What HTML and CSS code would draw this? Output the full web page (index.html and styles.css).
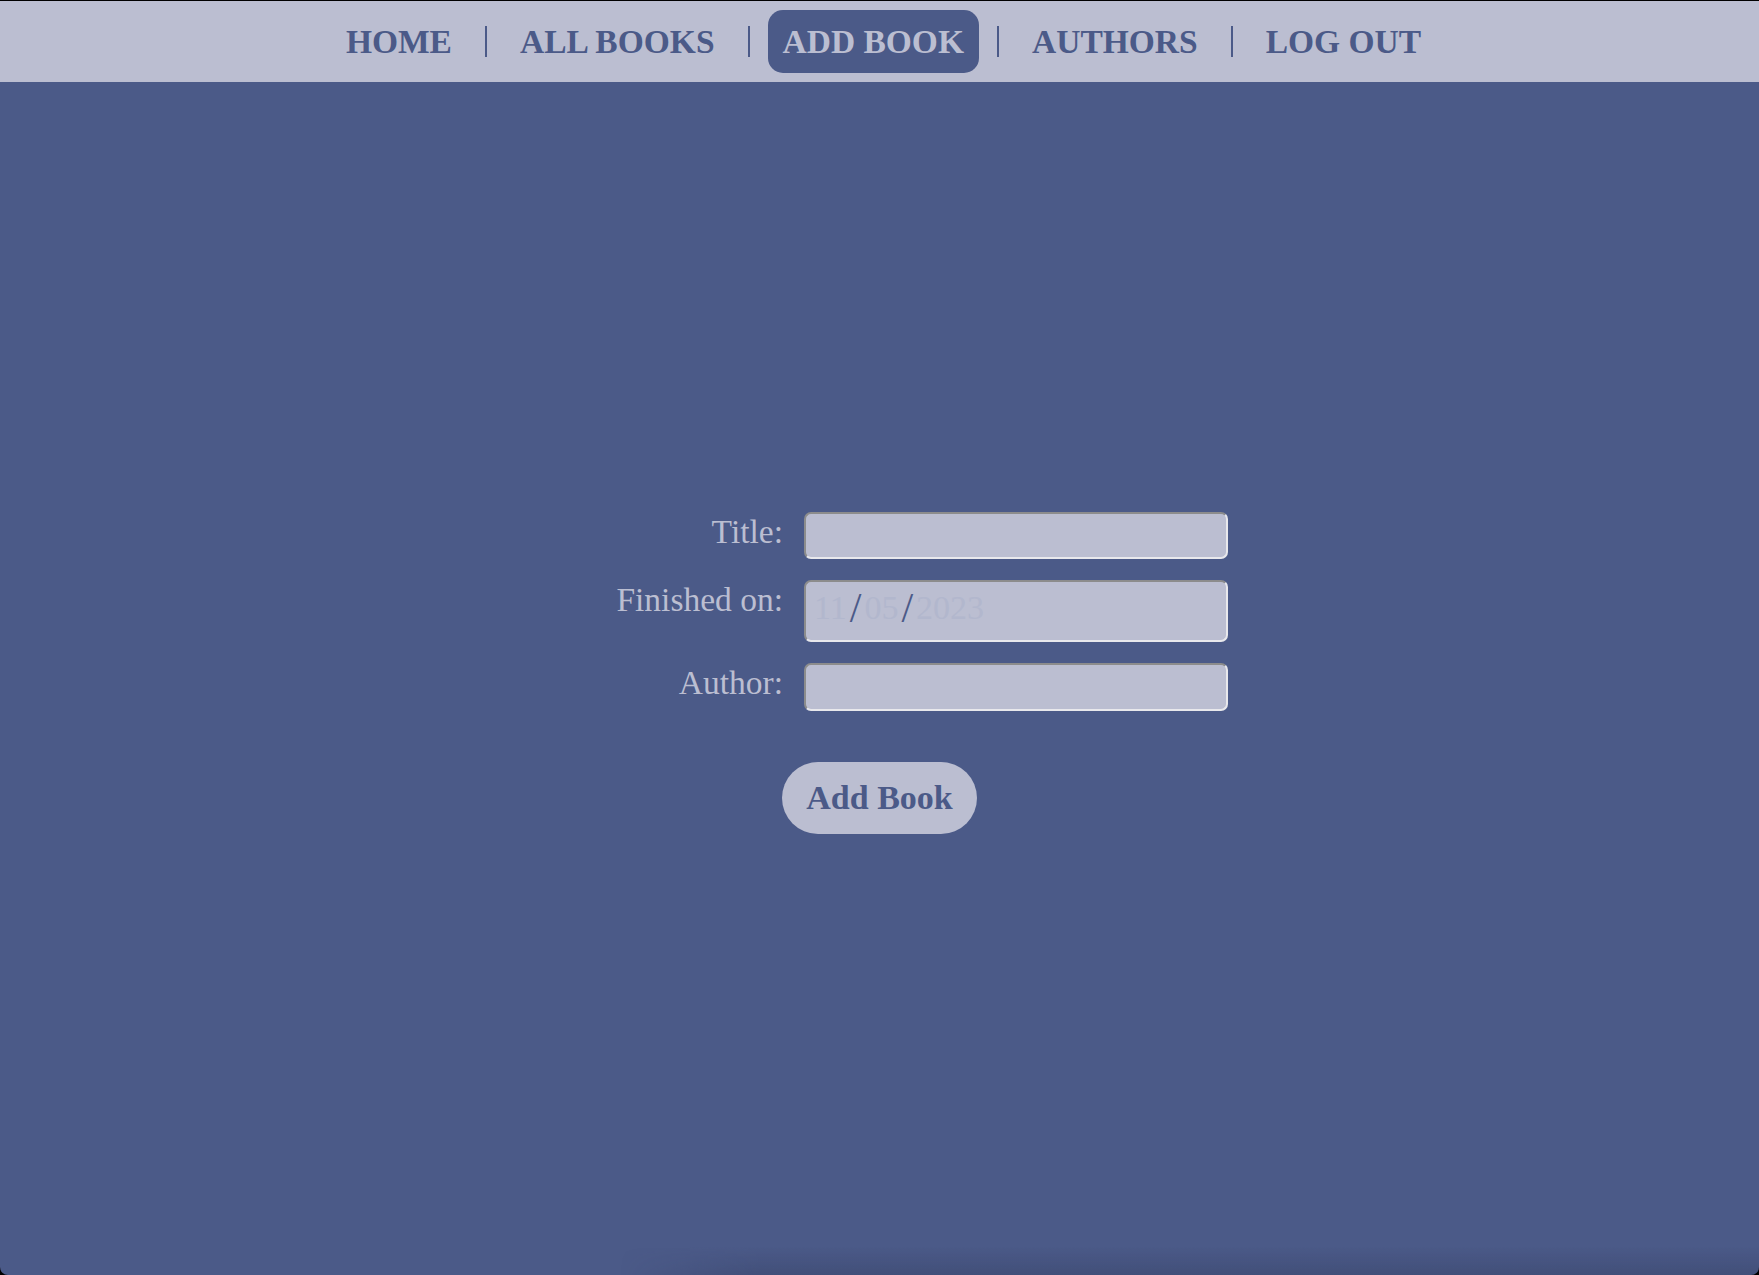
FILE: index.html
```html
<!DOCTYPE html>
<html lang="en">
<head>
<meta charset="utf-8">
<title>Add Book</title>
<link rel="stylesheet" href="styles.css">
</head>
<body>
<div class="page">
  <nav class="topnav">
    <a class="nav-link" href="#">HOME</a>
    <span class="nav-sep"></span>
    <a class="nav-link" href="#">ALL BOOKS</a>
    <span class="nav-sep"></span>
    <a class="nav-link nav-link-active" href="#">ADD BOOK</a>
    <span class="nav-sep"></span>
    <a class="nav-link" href="#">AUTHORS</a>
    <span class="nav-sep"></span>
    <a class="nav-link" href="#">LOG OUT</a>
  </nav>
  <main class="content">
    <form class="book-form">
      <div class="form-grid">
        <label class="field-label" for="title">Title:</label>
        <input class="field-input field-title" id="title" type="text">
        <label class="field-label">Finished on:</label>
        <div class="field-input field-date">
          <span class="date-part">11</span><span class="date-slash">/</span><span class="date-part">05</span><span class="date-slash">/</span><span class="date-part">2023</span>
        </div>
        <label class="field-label" for="author">Author:</label>
        <input class="field-input field-author" id="author" type="text">
      </div>
      <button class="submit-btn" type="button">Add Book</button>
    </form>
  </main>
</div>
</body>
</html>
```

FILE: styles.css
```css
html {
  background: #000;
}

body {
  margin: 0;
  font-family: "Liberation Serif", "Times New Roman", serif;
}

.page {
  position: relative;
  min-height: 1274px;
  margin-top: 1px;
  background: #4b5a88;
  border-bottom-left-radius: 8px;
  border-bottom-right-radius: 8px;
  overflow: hidden;
}

.page::after {
  content: "";
  position: absolute;
  left: 620px;
  right: 0;
  bottom: 0;
  height: 28px;
  background: linear-gradient(to bottom, rgba(40, 48, 80, 0), rgba(40, 48, 80, 0.26));
  -webkit-mask-image: linear-gradient(to right, transparent 0, #000 140px);
  mask-image: linear-gradient(to right, transparent 0, #000 140px);
  pointer-events: none;
}

.topnav {
  height: 81px;
  background: #bbbed1;
  display: flex;
  align-items: center;
  justify-content: center;
  padding-left: 8px;
}

.nav-link {
  display: block;
  height: 63px;
  line-height: 63px;
  padding: 0 15px;
  font-size: 33.5px;
  font-weight: bold;
  color: #4b5a88;
  text-decoration: none;
  border-radius: 15px;
  white-space: nowrap;
}

.nav-link-active {
  background: #4b5a88;
  color: #bbbed1;
}

.nav-sep {
  display: block;
  width: 2px;
  height: 31px;
  margin: 0 18px;
  background: #4b5a88;
}

.content {
  padding-top: 430px;
}

.book-form {
  display: flex;
  flex-direction: column;
  align-items: center;
}

.form-grid {
  display: grid;
  grid-template-columns: 252px 424px;
  column-gap: 21px;
  row-gap: 21px;
  align-items: start;
}

.field-label {
  font-size: 33.5px;
  color: #bbbed1;
  text-align: right;
  padding-top: 1px;
  line-height: normal;
  white-space: nowrap;
}

.field-input {
  box-sizing: border-box;
  width: 424px;
  margin: 0;
  padding: 0 4px;
  background: #bbbed1;
  border: 2px solid;
  border-color: #8c8c8c #e8e8ec #e8e8ec #8c8c8c;
  border-radius: 7px;
  font-family: "Liberation Serif", "Times New Roman", serif;
  font-size: 30px;
  color: #4b5a88;
  outline: none;
}

.field-title {
  height: 47px;
}

.field-author {
  height: 48px;
}

.field-date {
  height: 62px;
  display: flex;
  align-items: center;
  padding-left: 8px;
  padding-bottom: 6px;
  font-size: 34px;
}

.date-part {
  color: #b2b7cd;
}

.date-slash {
  color: #4b5a88;
  margin: 0 3px;
  font-size: 42px;
  line-height: 1;
}

.submit-btn {
  margin-top: 51px;
  height: 72px;
  padding: 0 24px;
  border: none;
  border-radius: 36px;
  background: #bbbed1;
  color: #4b5a88;
  font-family: "Liberation Serif", "Times New Roman", serif;
  font-size: 34px;
  font-weight: bold;
  line-height: 72px;
  cursor: pointer;
}
```
